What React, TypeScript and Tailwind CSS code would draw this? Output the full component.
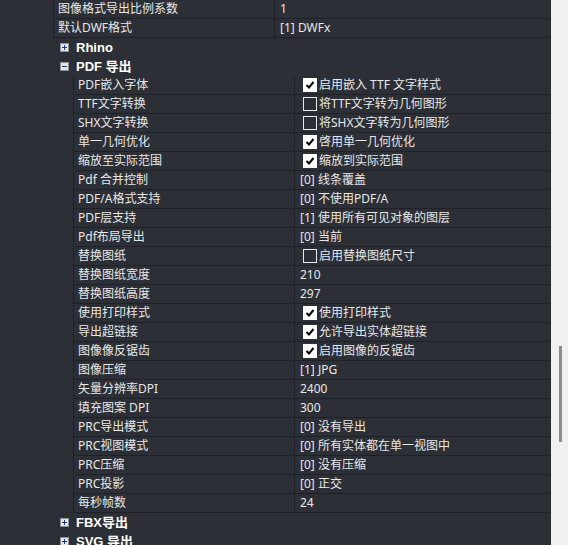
type Row =
  | { kind: "prop"; label: string; value?: string; check?: boolean; checkText?: string; level: 1 | 2 }
  | { kind: "group"; label: string; open: boolean };

const rows: Row[] = [
  { kind: "prop", level: 1, label: "图像格式导出比例系数", value: "1" },
  { kind: "prop", level: 1, label: "默认DWF格式", value: "[1] DWFx" },
  { kind: "group", label: "Rhino", open: false },
  { kind: "group", label: "PDF 导出", open: true },
  { kind: "prop", level: 2, label: "PDF嵌入字体", check: true, checkText: "启用嵌入 TTF 文字样式" },
  { kind: "prop", level: 2, label: "TTF文字转换", check: false, checkText: "将TTF文字转为几何图形" },
  { kind: "prop", level: 2, label: "SHX文字转换", check: false, checkText: "将SHX文字转为几何图形" },
  { kind: "prop", level: 2, label: "单一几何优化", check: true, checkText: "啓用单一几何优化" },
  { kind: "prop", level: 2, label: "缩放至实际范围", check: true, checkText: "缩放到实际范围" },
  { kind: "prop", level: 2, label: "Pdf 合并控制", value: "[0] 线条覆盖" },
  { kind: "prop", level: 2, label: "PDF/A格式支持", value: "[0] 不使用PDF/A" },
  { kind: "prop", level: 2, label: "PDF层支持", value: "[1] 使用所有可见对象的图层" },
  { kind: "prop", level: 2, label: "Pdf布局导出", value: "[0] 当前" },
  { kind: "prop", level: 2, label: "替换图纸", check: false, checkText: "启用替换图纸尺寸" },
  { kind: "prop", level: 2, label: "替换图纸宽度", value: "210" },
  { kind: "prop", level: 2, label: "替换图纸高度", value: "297" },
  { kind: "prop", level: 2, label: "使用打印样式", check: true, checkText: "使用打印样式" },
  { kind: "prop", level: 2, label: "导出超链接", check: true, checkText: "允许导出实体超链接" },
  { kind: "prop", level: 2, label: "图像像反锯齿", check: true, checkText: "启用图像的反锯齿" },
  { kind: "prop", level: 2, label: "图像压缩", value: "[1] JPG" },
  { kind: "prop", level: 2, label: "矢量分辨率DPI", value: "2400" },
  { kind: "prop", level: 2, label: "填充图案 DPI", value: "300" },
  { kind: "prop", level: 2, label: "PRC导出模式", value: "[0] 没有导出" },
  { kind: "prop", level: 2, label: "PRC视图模式", value: "[0] 所有实体都在单一视图中" },
  { kind: "prop", level: 2, label: "PRC压缩", value: "[0] 没有压缩" },
  { kind: "prop", level: 2, label: "PRC投影", value: "[0] 正交" },
  { kind: "prop", level: 2, label: "每秒帧数", value: "24" },
  { kind: "group", label: "FBX导出", open: false },
  { kind: "group", label: "SVG 导出", open: false },
];

function Expander({ open }: { open: boolean }) {
  return (
    <div className="w-[9px] h-[9px] border border-[#8e9096] bg-[#e4e6ea] flex items-center justify-center">
      <svg width="7" height="7" viewBox="0 0 7 7">
        <rect x="1" y="3" width="5" height="1" fill="#1d3a8a" />
        {!open && <rect x="3" y="1" width="1" height="5" fill="#1d3a8a" />}
      </svg>
    </div>
  );
}

function CheckBox({ checked }: { checked: boolean }) {
  if (!checked) {
    return <div className="w-[14px] h-[14px] border border-[#e8e8e8] shrink-0" />;
  }
  return (
    <div className="w-[14px] h-[14px] bg-white shrink-0 flex items-center justify-center">
      <svg width="10" height="10" viewBox="0 0 10 10">
        <path d="M1.5 5 L4 7.5 L8.5 2" fill="none" stroke="#000" strokeWidth="2" />
      </svg>
    </div>
  );
}

function PropRow({ row }: { row: Extract<Row, { kind: "prop" }> }) {
  return (
    <div className={`flex shrink-0 h-[19px] ${row.level === 1 ? "pl-[53px]" : "pl-[73px]"}`}>
      <div className="flex-1 flex border-b border-[#1e2125]">
        <div className="w-[222px] flex items-center pl-[4px] border-l border-r border-[#1e2125] text-[#e8e8e8] whitespace-nowrap overflow-hidden">
          {row.label}
        </div>
        {row.check !== undefined ? (
          <div className="flex-1 flex items-center pl-[8px] gap-[2px] text-[#e8e8e8] whitespace-nowrap">
            <CheckBox checked={row.check} />
            <span>{row.checkText}</span>
          </div>
        ) : (
          <div className="flex-1 flex items-center pl-[5px] text-[#e8e8e8] whitespace-nowrap">
            {row.value}
          </div>
        )}
      </div>
    </div>
  );
}

function GroupRow({ row }: { row: Extract<Row, { kind: "group" }> }) {
  return (
    <div className="flex shrink-0 h-[19px] items-center pl-[60px] gap-[7px]">
      <Expander open={row.open} />
      <span className="text-[13px] font-bold text-white font-['Liberation_Sans','Noto_Sans_CJK_SC',sans-serif]">
        {row.label}
      </span>
    </div>
  );
}

export default function App() {
  return (
    <div className="w-[568px] h-[545px] flex overflow-hidden bg-[#2c2f35] text-[12px] leading-none font-['Noto_Sans','Noto_Sans_CJK_SC',sans-serif]">
      <div className="w-[551px] flex flex-col">
        {rows.map((row, i) =>
          row.kind === "group" ? <GroupRow key={i} row={row} /> : <PropRow key={i} row={row} />
        )}
      </div>
      <div className="w-[17px] h-full bg-[#f0f0f0] relative">
        <div className="absolute left-[8px] top-[346px] w-[3px] h-[96px] bg-[#8c8c8c]" />
      </div>
    </div>
  );
}
